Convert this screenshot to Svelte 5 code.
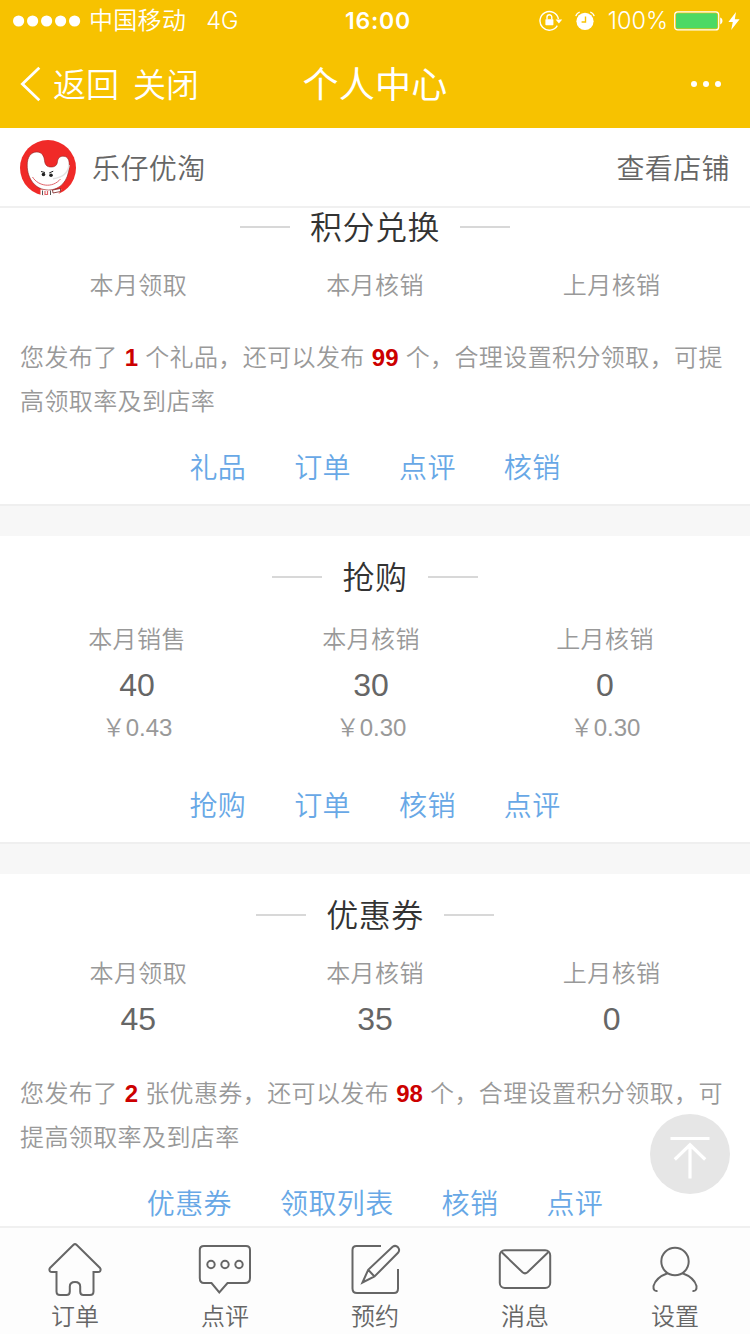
<script lang="ts">
    const sections = [
        {
            id: 'gift',
            title: '积分兑换',
            stats: [{ label: '本月领取' }, { label: '本月核销' }, { label: '上月核销' }],
            notice: ['您发布了', '1', '个礼品，还可以发布', '99', '个，合理设置积分领取，可提高领取率及到店率'],
            links: ['礼品', '订单', '点评', '核销']
        },
        {
            id: 'rush',
            title: '抢购',
            stats: [
                { label: '本月销售', count: 40, money: '0.43' },
                { label: '本月核销', count: 30, money: '0.30' },
                { label: '上月核销', count: 0, money: '0.30' }
            ],
            links: ['抢购', '订单', '核销', '点评']
        },
        {
            id: 'coupon',
            title: '优惠券',
            stats: [
                { label: '本月领取', count: 45 },
                { label: '本月核销', count: 35 },
                { label: '上月核销', count: 0 }
            ],
            notice: ['您发布了', '2', '张优惠券，还可以发布', '98', '个，合理设置积分领取，可提高领取率及到店率'],
            links: ['优惠券', '领取列表', '核销', '点评']
        }
    ];

    const tabs = [
        { icon: 'home', text: '订单' },
        { icon: 'comment', text: '点评' },
        { icon: 'edit', text: '预约' },
        { icon: 'mail', text: '消息' },
        { icon: 'user', text: '设置' }
    ];
</script>

<div class="page">
    <header>
        <div class="status">
            <div class="carrier">
                <svg width="68" height="12" viewBox="0 0 68 12" fill="#fff">
                    {#each [5.6, 19.6, 33.6, 47.6, 61.6] as x}
                        <circle cx={x} cy="6" r="5.6" />
                    {/each}
                </svg>
                <span class="operator">中国移动</span>
                <span class="network">4G</span>
            </div>
            <div class="time">16:00</div>
            <div class="device">
                <svg class="lock" width="24" height="22" viewBox="0 0 24 22" fill="none" stroke="#fff" stroke-width="1.4">
                    <path d="M18.3 15.6A9.3 9.3 0 1 1 19.4 9" />
                    <path d="M16.6 9.4h6.6l-3.3 4z" fill="#fff" stroke="none" />
                    <rect x="6.4" y="9.2" width="8" height="6" rx=".6" fill="#fff" stroke="none" />
                    <path d="M8 9.6V7.2a2.4 2.4 0 0 1 4.8 0v2.4" />
                </svg>
                <svg class="alarm" width="20" height="20" viewBox="0 0 20 20" fill="none" stroke="#fff">
                    <circle cx="10" cy="10.3" r="8.6" fill="#fff" stroke="none" />
                    <path d="M.8 5.2A6 6 0 0 1 4.8 1M19.2 5.2A6 6 0 0 0 15.2 1" stroke-width="1.3" />
                    <path d="M10.5 5.6v5.4H6.6" stroke="#f7c200" stroke-width="1.4" />
                </svg>
                <span class="percent">100%</span>
                <svg class="battery" width="50" height="20" viewBox="0 0 50 20">
                    <rect x=".7" y=".9" width="44" height="18" rx="3" fill="none" stroke="#fff" stroke-width="1.2" />
                    <rect x="2" y="2.2" width="41.4" height="15.4" rx="1.6" fill="#4cd964" />
                    <path d="M46.2 6.6c3 .6 3 6.2 0 6.8z" fill="#fff" />
                </svg>
                <svg width="12" height="18" viewBox="0 0 12 18" fill="#fff">
                    <path d="M8 0 .4 10h4.400L3.200 18 11.600 7.200H6.800z" />
                </svg>
            </div>
        </div>
        <nav>
            <div class="back">
                <svg width="22" height="36" viewBox="0 0 22 36" fill="none" stroke="#fff" stroke-width="2.8">
                    <path d="M19.3 1.8 2.4 18l16.9 16.2" />
                </svg>
                <span>返回</span>
                <span class="close">关闭</span>
            </div>
            <h1>个人中心</h1>
            <svg class="more" width="32" height="8" viewBox="0 0 32 8" fill="#fff">
                <circle cx="4" cy="4" r="3" />
                <circle cx="16" cy="4" r="3" />
                <circle cx="28" cy="4" r="3" />
            </svg>
        </nav>
    </header>

    <div class="shop">
        <svg class="avatar" width="56" height="56" viewBox="0 0 56 56">
            <circle cx="28" cy="28" r="28" fill="#f02a28" />
            <path d="M20.5 49.5h21l-3.5 5.2a28 28 0 0 1-17.5.3z" fill="#fff" />
            <path
                d="M7.2 25C7.2 17 11 11.8 17 12c5 .2 7 4 7.5 8.5.5 4.5 2.5 6.5 6.500 6.500s6-1.500 6.500-5.500c.5-4 3-5.500 6.500-5.200 4 .4 5.600 4 5.200 10.200C48.500 41 40 50 28.500 50 15.500 50 7.200 39 7.200 25z"
                fill="#fff"
                stroke="#8d2020"
                stroke-width=".6"
            />
            <path d="M49 25c-.8 7-6 12.5-16 13.8" fill="none" stroke="#e3e3e3" stroke-width="1.6" />
            <path d="M12.5 37c6 9.500 20 11.500 28 2" fill="none" stroke="#e0646a" stroke-width="1" />
            <path d="m21 31.5 4 1M33.2 31.2l-4 1.8" stroke="#222" stroke-width="1" />
            <circle cx="23.5" cy="34.5" r="1.8" fill="#222" />
            <circle cx="31" cy="35.2" r="1.8" fill="#222" />
            <path d="M22.5 50.5V55M30.5 50.5V55" stroke="#555" stroke-width="1" />
            <path d="M25 51v3.5h2.500V51" fill="none" stroke="#e0646a" stroke-width="1.2" />
            <path d="M32.5 50 40.5 48.500v3l-7.500 1.500z" fill="#fff" stroke="#7b1a1a" stroke-width=".8" />
        </svg>
        <span class="name">乐仔优淘</span>
        <span>查看店铺</span>
    </div>

    <main>
        {#each sections as section (section.id)}
            <section class={section.id}>
                <h2><span>{section.title}</span></h2>
                <div class="stats">
                    {#each section.stats as stat}
                        <div class="stat">
                            <div class="label">{stat.label}</div>
                            {#if stat.count !== undefined}
                                <div class="count">{stat.count}</div>
                            {/if}
                            {#if stat.money}
                                <div class="money">￥{stat.money}</div>
                            {/if}
                        </div>
                    {/each}
                </div>
                {#if section.notice}
                    <p>{section.notice[0]}<b>{section.notice[1]}</b>{section.notice[2]}<b>{section.notice[3]}</b>{section.notice[4]}</p>
                {/if}
                <div class="links">
                    {#each section.links as link}
                        <a href="#{section.id}">{link}</a>
                    {/each}
                </div>
            </section>
        {/each}
    </main>

    <button class="to-top" aria-label="top">
        <svg width="40" height="44" viewBox="0 0 40 44" fill="none" stroke="#fff" stroke-width="3.2">
            <path d="M.5 3.5h39M20 9.5v34M4.800 24.500 20 9.800l15.200 14.700" />
        </svg>
    </button>

    <footer>
        {#each tabs as tab}
            <div class="tab">
                <svg width="56" height="56" viewBox="0 0 56 56" fill="none" stroke="#666" stroke-width="2">
                    {#if tab.icon === 'home'}
                        <path d="M26.5 3.8Q28 2.4 29.5 3.8L52.8 26.7Q54.3 28.5 53 30.3 52.5 31 51 31H46.5V50.5Q46.5 54 43 54H36.5Q33.2 54 33.2 50.5V45.5Q33.2 41 28 41T22.8 45.5V50.5Q22.8 54 19.5 54H13Q9.5 54 9.5 50.5V31H5Q3.5 31 3 30.3 1.7 28.5 3.2 26.7z" />
                    {:else if tab.icon === 'comment'}
                        <path d="M7 5H49Q53 5 53 9V37Q53 42 48 42H30.5L22.3 51.5 14.5 42H7Q2.8 42 2.8 37V9Q2.8 5 7 5z" />
                        <circle cx="14" cy="23.5" r="3.7" />
                        <circle cx="28" cy="23.5" r="3.7" />
                        <circle cx="42" cy="23.5" r="3.7" />
                    {:else if tab.icon === 'edit'}
                        <path d="M34 5H9.5Q5.5 5 5.5 9V47.5Q5.5 52 10 52H47Q51 52 51 47.5V28" />
                        <path d="M15.5 41.5 21.2 28.8 45.6 5.8Q48.5 3.7 51 6.3 53.3 9 51 11.8L27.5 35.5zM21.2 28.8l6.3 6.7" />
                    {:else if tab.icon === 'mail'}
                        <rect x="2.8" y="9.3" width="50.4" height="37.6" rx="5" />
                        <path d="M4.5 11 25.5 31.3Q28 33.5 30.5 31.3L51.5 11" />
                    {:else}
                        <circle cx="28" cy="20.5" r="13.7" />
                        <path d="M10.5 50Q6 50.5 6.5 45 9 36.5 20.5 32.3M45.5 50Q50 50.5 49.5 45 47 36.5 35.5 32.3" />
                    {/if}
                </svg>
                <span>{tab.text}</span>
            </div>
        {/each}
    </footer>
</div>

<style>
    :global(body) {
        background: #fff;
    }
    .page {
        position: relative;
        width: 750px;
        height: 1334px;
        overflow: hidden;
        display: flex;
        flex-direction: column;
        font-family: "Liberation Sans", "Noto Sans CJK SC", sans-serif;
        font-weight: 350;
        color: #666;
        background: #fff;
    }
    svg {
        display: block;
        flex: none;
    }
    header {
        height: 128px;
        flex: none;
        background: #f7c200;
        color: #fff;
    }
    .status {
        height: 40px;
        padding: 0 10px 0 13px;
        display: grid;
        grid-template-columns: 1fr auto 1fr;
        align-items: center;
        font-family: Inter, "Noto Sans CJK SC", sans-serif;
        font-weight: 300;
        font-size: 23.5px;
        line-height: 42px;
    }
    .carrier, .device {
        display: flex;
        align-items: center;
    }
    .operator {
        margin-left: 8px;
        font-size: 24px;
        font-weight: 350;
        letter-spacing: .3px;
    }
    .network {
        margin-left: 20px;
    }
    .time {
        font-weight: 600;
        font-size: 23px;
        letter-spacing: .8px;
        padding-left: 3px;
    }
    .device {
        justify-content: flex-end;
    }
    .alarm {
        margin: 0 13px 0 12px;
    }
    .battery {
        margin: 0 4px 0 6px;
    }
    nav {
        height: 88px;
        padding: 0 20px;
        display: grid;
        grid-template-columns: 1fr auto 1fr;
        align-items: center;
        font-size: 33px;
    }
    .back {
        display: flex;
        align-items: center;
    }
    .back span {
        margin-left: 11px;
        padding-bottom: 3px;
    }
    .back .close {
        margin-left: 14px;
    }
    h1 {
        margin: 0;
        padding-bottom: 4px;
        font-size: 36px;
        font-weight: 400;
        letter-spacing: .2px;
    }
    .more {
        justify-self: end;
        margin-right: 8px;
    }
    .shop {
        height: 78px;
        flex: none;
        padding: 0 20px;
        display: flex;
        align-items: center;
        border-bottom: 2px solid #f0f0f0;
        font-size: 28px;
        letter-spacing: .4px;
    }
    .avatar {
        margin-top: 2px;
    }
    .name {
        flex: 1;
        margin-left: 16px;
    }
    main {
        height: 1018px;
        flex: none;
        overflow: hidden;
        background: #f7f7f7;
    }
    section {
        box-sizing: border-box;
        margin-bottom: 30px;
        background: #fff;
        border-bottom: 2px solid #efefef;
    }
    .gift {
        height: 298px;
    }
    .rush {
        height: 308px;
        padding-top: 20px;
    }
    .coupon {
        height: 380px;
        padding-top: 20px;
    }
    h2 {
        height: 42px;
        margin: 0 0 -2px;
        display: flex;
        align-items: center;
        justify-content: center;
        gap: 20px;
        font-size: 32px;
        font-weight: 350;
        letter-spacing: .5px;
        color: #333;
    }
    h2 span {
        padding-bottom: 4px;
    }
    h2::before, h2::after {
        content: "";
        width: 50px;
        height: 2px;
        background: #d8d8d8;
    }
    .gift h2 {
        height: 38px;
        margin: 0;
    }
    .stats {
        padding: 20px 20px 0;
        display: grid;
        grid-template-columns: repeat(3, 1fr);
        text-align: center;
        font-size: 24px;
        color: #999;
    }
    .rush .stats {
        padding: 24px 28px 0 20px;
    }
    .label {
        height: 40px;
        line-height: 40px;
        letter-spacing: .4px;
    }
    .count {
        height: 50px;
        line-height: 50px;
        font-size: 32px;
        color: #666;
    }
    .money {
        height: 36px;
        line-height: 36px;
    }
    p {
        margin: 30px 20px 0;
        font-size: 24px;
        line-height: 44px;
        letter-spacing: .4px;
        color: #999;
    }
    .coupon p {
        margin-top: 28px;
    }
    b {
        margin: 0 7.1px;
        color: #c00;
        font-weight: 700;
        letter-spacing: 0;
    }
    .links {
        margin-top: 22px;
        height: 40px;
        display: flex;
        align-items: center;
        justify-content: center;
        gap: 48px;
    }
    .rush .links {
        margin-top: 38px;
    }
    a {
        color: #68a8e6;
        font-size: 28px;
        letter-spacing: .4px;
        text-decoration: none;
    }
    .to-top {
        position: absolute;
        left: 650px;
        top: 1114px;
        width: 80px;
        height: 80px;
        padding: 6px 0 0;
        border: none;
        border-radius: 50%;
        background: #e6e6e6;
        display: flex;
        align-items: center;
        justify-content: center;
    }
    footer {
        flex: 1;
        padding-top: 13px;
        display: grid;
        grid-template-columns: repeat(5, 1fr);
        border-top: 2px solid #f0f0f0;
        background: #fdfdfd;
    }
    .tab {
        display: flex;
        flex-direction: column;
        align-items: center;
        font-size: 24px;
        line-height: 39px;
    }
</style>
